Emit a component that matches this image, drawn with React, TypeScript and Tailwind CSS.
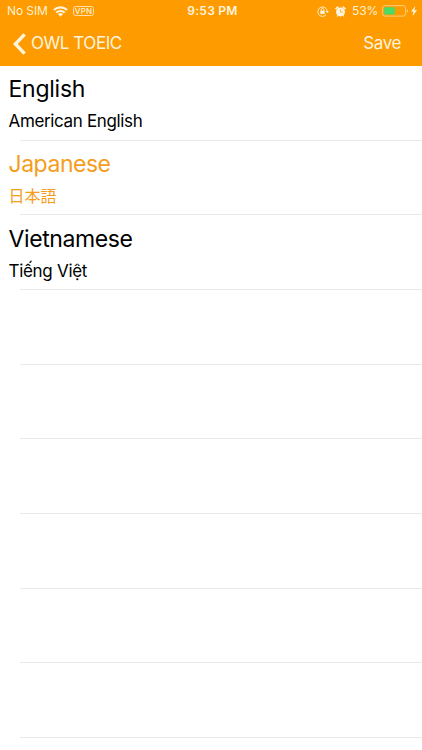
import { useState } from "react";
import clsx from "clsx";

interface Language {
  name: string;
  nativeName: string;
  nameClass: string;
  nativeClass: string;
}

const LANGUAGES: Language[] = [
  { name: "English", nativeName: "American English", nameClass: "tracking-[-0.25px]", nativeClass: "text-[17px] tracking-[-0.35px]" },
  { name: "Japanese", nativeName: "日本語", nameClass: "tracking-[-0.47px]", nativeClass: "text-[16px]" },
  { name: "Vietnamese", nativeName: "Tiếng Việt", nameClass: "tracking-[-0.4px]", nativeClass: "text-[17px] tracking-[-0.3px]" },
];

const EMPTY_ROWS = 6;

function WifiIcon() {
  return (
    <svg className="h-[11px] w-[15px]" viewBox="0 0 15 11" fill="none" stroke="currentColor" strokeWidth="2.1">
      <path d="M.9 4.1a9.4 9.4 0 0 1 13.2 0" />
      <path d="M3.3 6.7a6 6 0 0 1 8.4 0" />
      <path d="M7.5 10.8 5 8.3a3.5 3.5 0 0 1 5 0z" fill="currentColor" stroke="none" />
    </svg>
  );
}

function RotationLockIcon() {
  return (
    <svg className="h-[11px] w-[12px]" viewBox="0 0 12 11" fill="none" stroke="currentColor" strokeWidth="0.9">
      <path d="M9.2 8.6A4.7 4.7 0 1 1 10.2 5.2" />
      <path d="M8.6 5h3.2l-1.6 2.1z" fill="currentColor" stroke="none" />
      <rect x="3.3" y="4.7" width="4.4" height="3.4" rx="0.4" fill="currentColor" stroke="none" />
      <path d="M4.2 5V3.8a1.3 1.3 0 0 1 2.6 0V5" />
    </svg>
  );
}

function AlarmIcon() {
  return (
    <svg className="h-[11px] w-[11px]" viewBox="0 0 11 11" fill="none" stroke="currentColor">
      <circle cx="5.5" cy="5.9" r="4.5" fill="currentColor" stroke="none" />
      <path d="M1 2.6 2.8 1.1M10 2.6 8.2 1.1" strokeWidth="1.6" strokeLinecap="round" />
      <path d="m2.8 9.4-.8 1.1M8.2 9.4l.8 1.1" strokeWidth="1.1" />
      <path d="M5.5 3.4v2.8H7.6" stroke="#fd9b00" strokeWidth="0.7" />
    </svg>
  );
}

function BatteryIcon() {
  return (
    <svg className="h-[12px] w-[27px]" viewBox="0 0 27 12" fill="none">
      <rect x="0.6" y="0.7" width="23" height="10.4" rx="2.4" stroke="#ffd07a" strokeWidth="1" />
      <rect x="2.1" y="2.2" width="10.8" height="7.4" rx="1" fill="#4cd964" />
      <path d="M24.9 4.2c1.5.6 1.5 2.9 0 3.5z" fill="#ffd07a" />
    </svg>
  );
}

function BoltIcon() {
  return (
    <svg className="h-[10px] w-[6px]" viewBox="0 0 6 10" fill="currentColor">
      <path d="M4.4 0 0 5.6h2.5L1.5 10 6 4.2H3.4z" />
    </svg>
  );
}

function StatusBar() {
  return (
    <div className="grid h-[22px] grid-cols-[1fr_auto_1fr] items-center pl-[7px] pr-[5px] text-[12px] leading-[22px] text-[#fff4dd]">
      <div className="flex items-center">
        <span className="w-[46px] tracking-[-0.1px] text-[#fff0d0]">No SIM</span>
        <WifiIcon />
        <span className="ml-[5px] flex h-[10px] w-[21px] items-center justify-center rounded-[2.5px] border border-[#ffe0a8] text-[8px] leading-none font-medium tracking-[0.2px]">
          VPN
        </span>
      </div>
      <span className="pl-px text-[12px] font-semibold tracking-[0.25px]">9:53 PM</span>
      <div className="flex items-center justify-end">
        <RotationLockIcon />
        <span className="ml-[6px] flex"><AlarmIcon /></span>
        <span className="ml-[6px] w-[30px] tracking-[-0.1px] text-[#fff0d0]">53%</span>
        <BatteryIcon />
        <span className="ml-[2px] flex"><BoltIcon /></span>
      </div>
    </div>
  );
}

export default function App() {
  const [selected, setSelected] = useState("Japanese");

  return (
    <div className="flex h-[750px] w-full flex-col overflow-hidden bg-white font-['Inter','Noto_Sans_CJK_JP',sans-serif] text-black">
      <header className="h-[66px] shrink-0 bg-[#fd9b00]">
        <StatusBar />
        <nav className="flex h-[43px] items-center justify-between pl-[13px] pr-[21px] text-[17px] text-[#fff4dd]">
          <button className="flex items-center gap-[5px] tracking-[-0.45px]">
            <svg className="h-[22px] w-[13px]" viewBox="0 0 13 22" fill="none" stroke="currentColor" strokeWidth="3.4">
              <path d="M11.6 1.4 2.4 11l9.2 9.6" />
            </svg>
            OWL TOEIC
          </button>
          <button className="tracking-[-0.4px]">Save</button>
        </nav>
      </header>

      <ul>
        {LANGUAGES.map((lang) => (
          <li
            key={lang.name}
            onClick={() => setSelected(lang.name)}
            className={clsx("flex h-[74.67px] flex-col", selected === lang.name && "text-[#f59d1c]")}
          >
            <div className="flex-1 pl-[8.5px] pt-[7.4px]">
              <p className={clsx("text-[23px] leading-[32px]", lang.nameClass)}>{lang.name}</p>
              <p className={clsx("leading-[33.4px]", lang.nativeClass)}>{lang.nativeName}</p>
            </div>
            <div className="ml-[20px] h-px bg-[#e9e9e9]" />
          </li>
        ))}
        {Array.from({ length: EMPTY_ROWS }, (_, i) => (
          <li key={i} className="flex h-[74.67px] flex-col justify-end">
            <div className="ml-[20px] h-px bg-[#e9e9e9]" />
          </li>
        ))}
      </ul>
    </div>
  );
}
